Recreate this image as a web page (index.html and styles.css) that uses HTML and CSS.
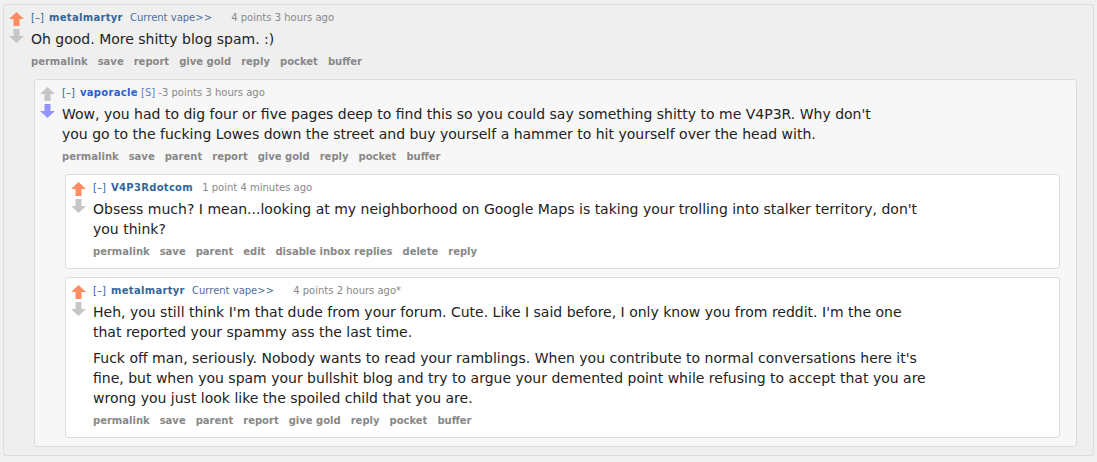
FILE: index.html
```html
<!DOCTYPE html>
<html>
<head>
<meta charset="utf-8">
<link rel="stylesheet" href="styles.css">
</head>
<body>
<div class="comment c-odd">
  <div class="midcol">
    <svg class="arrow" viewBox="0 0 15 14"><polygon class="up-on" points="7.5,0 15,7 10.5,7 10.5,14 4.5,14 4.5,7 0,7"/></svg>
    <svg class="arrow down" viewBox="0 0 15 14"><polygon class="gray" points="4.5,0 10.5,0 10.5,7 15,7 7.5,14 0,7 4.5,7"/></svg>
  </div>
  <div class="entry">
    <p class="tagline"><span class="expand">[–]</span> <span class="author">metalmartyr</span> <span class="flair">Current vape&gt;&gt;</span> <span class="score">4 points 3 hours ago</span></p>
    <div class="md"><p>Oh good. More shitty blog spam. :)</p></div>
    <ul class="buttons"><li>permalink</li><li>save</li><li>report</li><li>give gold</li><li>reply</li><li>pocket</li><li>buffer</li></ul>
    <div class="children">
      <div class="comment c-even">
        <div class="midcol">
          <svg class="arrow" viewBox="0 0 15 14"><polygon class="gray" points="7.5,0 15,7 10.5,7 10.5,14 4.5,14 4.5,7 0,7"/></svg>
          <svg class="arrow down" viewBox="0 0 15 14"><polygon class="down-on" points="4.5,0 10.5,0 10.5,7 15,7 7.5,14 0,7 4.5,7"/></svg>
        </div>
        <div class="entry">
          <p class="tagline"><span class="expand">[–]</span> <span class="author op">vaporacle</span> <span class="sub">[S]</span> <span class="score">-3 points 3 hours ago</span></p>
          <div class="md"><p>Wow, you had to dig four or five pages deep to find this so you could say something shitty to me V4P3R. Why don't you go to the fucking Lowes down the street and buy yourself a hammer to hit yourself over the head with.</p></div>
          <ul class="buttons"><li>permalink</li><li>save</li><li>parent</li><li>report</li><li>give gold</li><li>reply</li><li>pocket</li><li>buffer</li></ul>
          <div class="children">
            <div class="comment c-odd2">
              <div class="midcol">
                <svg class="arrow" viewBox="0 0 15 14"><polygon class="up-on" points="7.5,0 15,7 10.5,7 10.5,14 4.5,14 4.5,7 0,7"/></svg>
                <svg class="arrow down" viewBox="0 0 15 14"><polygon class="gray" points="4.5,0 10.5,0 10.5,7 15,7 7.5,14 0,7 4.5,7"/></svg>
              </div>
              <div class="entry">
                <p class="tagline"><span class="expand">[–]</span> <span class="author">V4P3Rdotcom</span> <span class="score wide">1 point 4 minutes ago</span></p>
                <div class="md"><p>Obsess much? I mean...looking at my neighborhood on Google Maps is taking your trolling into stalker territory, don't you think?</p></div>
                <ul class="buttons"><li>permalink</li><li>save</li><li>parent</li><li>edit</li><li>disable inbox replies</li><li>delete</li><li>reply</li></ul>
              </div>
            </div>
            <div class="comment c-odd2">
              <div class="midcol">
                <svg class="arrow" viewBox="0 0 15 14"><polygon class="up-on" points="7.5,0 15,7 10.5,7 10.5,14 4.5,14 4.5,7 0,7"/></svg>
                <svg class="arrow down" viewBox="0 0 15 14"><polygon class="gray" points="4.5,0 10.5,0 10.5,7 15,7 7.5,14 0,7 4.5,7"/></svg>
              </div>
              <div class="entry">
                <p class="tagline"><span class="expand">[–]</span> <span class="author">metalmartyr</span> <span class="flair">Current vape&gt;&gt;</span> <span class="score">4 points 2 hours ago*</span></p>
                <div class="md"><p>Heh, you still think I'm that dude from your forum. Cute. Like I said before, I only know you from reddit. I'm the one that reported your spammy ass the last time.</p><p>Fuck off man, seriously. Nobody wants to read your ramblings. When you contribute to normal conversations here it's fine, but when you spam your bullshit blog and try to argue your demented point while refusing to accept that you are wrong you just look like the spoiled child that you are.</p></div>
                <ul class="buttons"><li>permalink</li><li>save</li><li>parent</li><li>report</li><li>give gold</li><li>reply</li><li>pocket</li><li>buffer</li></ul>
              </div>
            </div>
          </div>
        </div>
      </div>
    </div>
  </div>
</div>
</body>
</html>
```
FILE: styles.css
```css
html, body {
  margin: 0;
  padding: 0;
}
body {
  background: #f0f0f0;
  padding: 4px 3px 6px 3px;
  font-family: "DejaVu Sans", Verdana, sans-serif;
  color: #222;
}
.comment {
  display: flex;
  border: 1px solid #dcdcdc;
  border-radius: 3px;
  padding: 6px 16px 8px 5px;
}
.c-odd { background: #efefef; }
.c-even { background: #f7f7f7; }
.c-odd2 { background: #ffffff; }
.midcol {
  width: 22px;
  flex: 0 0 22px;
  display: flex;
  flex-direction: column;
}
.arrow {
  display: block;
  width: 15px;
  height: 14px;
  margin-top: 1px;
}
.arrow.down { margin-top: 3px; }
.up-on { fill: #ff8b60; }
.down-on { fill: #9494ff; }
.gray { fill: #c6c6c6; }
.entry {
  flex: 1;
  min-width: 0;
}
.tagline {
  margin: 0;
  font-size: 10px;
  line-height: 14px;
  color: #888;
}
.expand { color: #369; }
.author { color: #369; font-weight: bold; margin-left: 2px; letter-spacing: 0.3px; }
.author.op { color: #2a5fd0; }
.sub { color: #5a80d0; }
.flair { color: #4f6e9e; margin-left: 4px; margin-right: 16px; }
.score.wide { margin-left: 6px; }
.md {
  margin-top: 4px;
  max-width: 835px;
  font-size: 14px;
  line-height: 20px;
  color: #222;
}
.md p { margin: 0 0 6px 0; }
.md p:last-child { margin-bottom: 0; }
.buttons {
  list-style: none;
  margin: 6px 0 1px 0;
  padding: 0;
  display: flex;
  font-size: 10px;
  line-height: 14px;
  font-weight: bold;
  color: #888;
}
.buttons li { padding-right: 10px; }
.children {
  margin: 10px 0 0 3px;
  display: flex;
  flex-direction: column;
  gap: 8px;
}
```
